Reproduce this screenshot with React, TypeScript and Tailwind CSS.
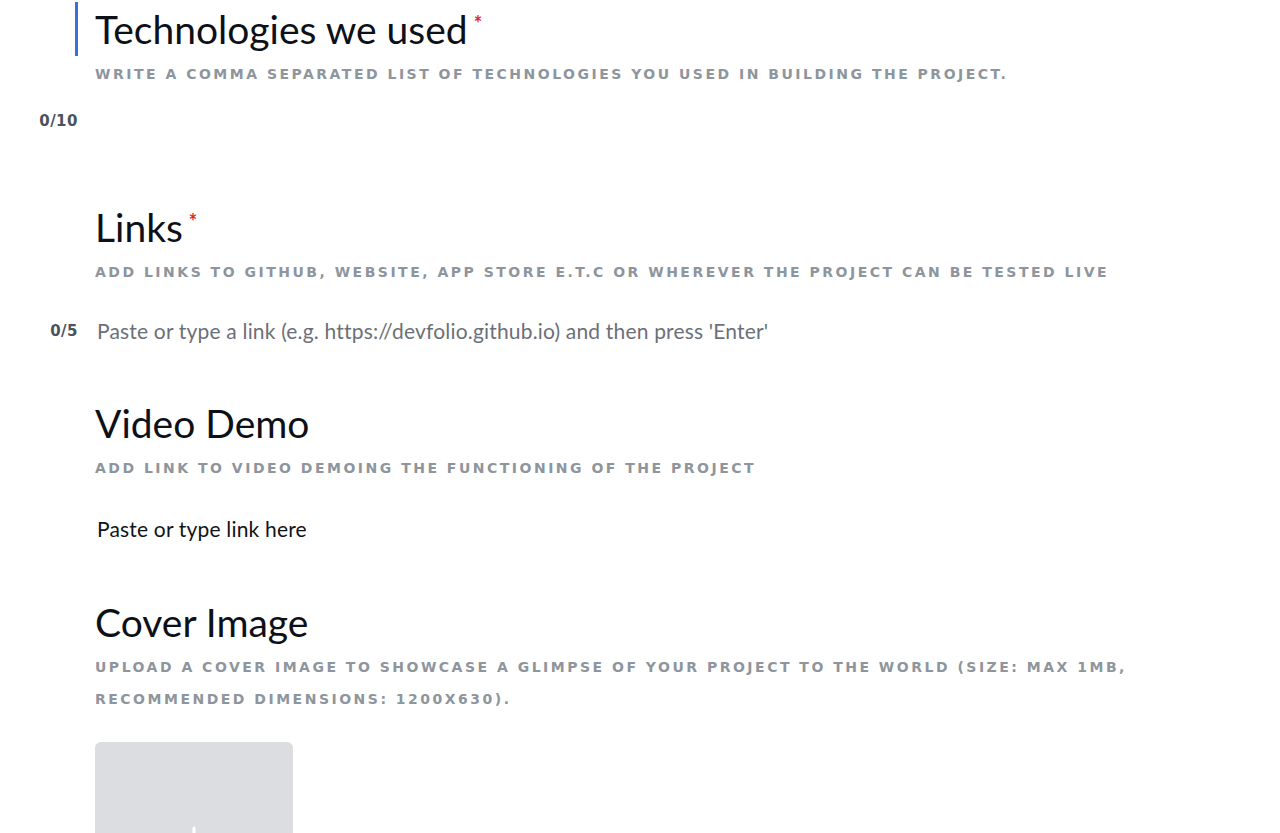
import React from 'react';

const headFont = { fontFamily: 'Lato, "Open Sans", sans-serif' } as const;
const capsFont = { fontFamily: '"DejaVu Sans", Inter, sans-serif' } as const;

interface SectionProps {
  title: string;
  required?: boolean;
  active?: boolean;
  hint: React.ReactNode;
  children?: React.ReactNode;
}

const Section: React.FC<SectionProps> = ({ title, required, active, hint, children }) => (
  <div>
    <div className="flex">
      <div className="w-[75px] shrink-0" />
      <div
        className={`border-l-[3px] pl-[17px] ${active ? 'border-[#3b6fe0]' : 'border-transparent'}`}
      >
        <h2
          className="flex h-[54px] items-center text-[39px] leading-[54px] text-[#0d1117]"
          style={headFont}
        >
          {title}
          {required && (
            <span className="ml-[6px] -mt-[12px] text-[20px] font-bold leading-none text-[#e3261f]">*</span>
          )}
        </h2>
      </div>
    </div>
    <div className="mt-[2px] flex">
      <div className="w-[95px] shrink-0" />
      <p
        className="text-[14px] font-bold uppercase leading-[32px] tracking-[2.5px] text-[#8e959c]"
        style={capsFont}
      >
        {hint}
      </p>
    </div>
    {children}
  </div>
);

const InputRow: React.FC<{ count?: string; placeholder?: string; filled?: boolean }> = ({
  count,
  placeholder,
  filled,
}) => (
  <div className="flex h-[44px] items-center">
    <div
      className="w-[78px] shrink-0 text-right text-[15px] font-bold tracking-[0.5px] text-[#4a5260]"
      style={capsFont}
    >
      {count}
    </div>
    <div
      className={`pl-[19px] text-[21px] tracking-[0.18px] ${filled ? 'text-[#111418]' : 'text-[#6b7078]'}`}
      style={headFont}
    >
      {placeholder}
    </div>
  </div>
);

export default function App() {
  return (
    <div className="h-[833px] w-[1280px] overflow-hidden bg-white pt-[2px]">
      <Section
        title="Technologies we used"
        required
        active
        hint="Write a comma separated list of technologies you used in building the project."
      >
        <div className="mt-[9px]">
          <InputRow count="0/10" />
        </div>
      </Section>

      <div className="mt-[57px]">
        <Section
          title="Links"
          required
          hint="Add links to Github, Website, App Store e.t.c or wherever the project can be tested live"
        >
          <div className="mt-[21px]">
            <InputRow
              count="0/5"
              placeholder="Paste or type a link (e.g. https://devfolio.github.io) and then press 'Enter'"
            />
          </div>
        </Section>
      </div>

      <div className="mt-[43px]">
        <Section title="Video Demo" hint="Add link to video demoing the functioning of the project">
          <div className="mt-[23px]">
            <InputRow placeholder="Paste or type link here" filled />
          </div>
        </Section>
      </div>

      <div className="mt-[44px]">
        <Section
          title="Cover Image"
          hint={
            <>
              Upload a cover image to showcase a glimpse of your project to the world (size: max 1MB,
              <br />
              recommended dimensions: 1200x630).
            </>
          }
        >
          <div className="mt-[27px] flex">
            <div className="w-[95px] shrink-0" />
            <div className="flex h-[198px] w-[198px] items-center justify-center rounded-[6px] bg-[#dcdde0]">
              <svg width="30" height="30" viewBox="0 0 30 30" fill="none">
                <path d="M15 2v26M2 15h26" stroke="#ffffff" strokeWidth="3" strokeLinecap="round" />
              </svg>
            </div>
          </div>
        </Section>
      </div>
    </div>
  );
}
